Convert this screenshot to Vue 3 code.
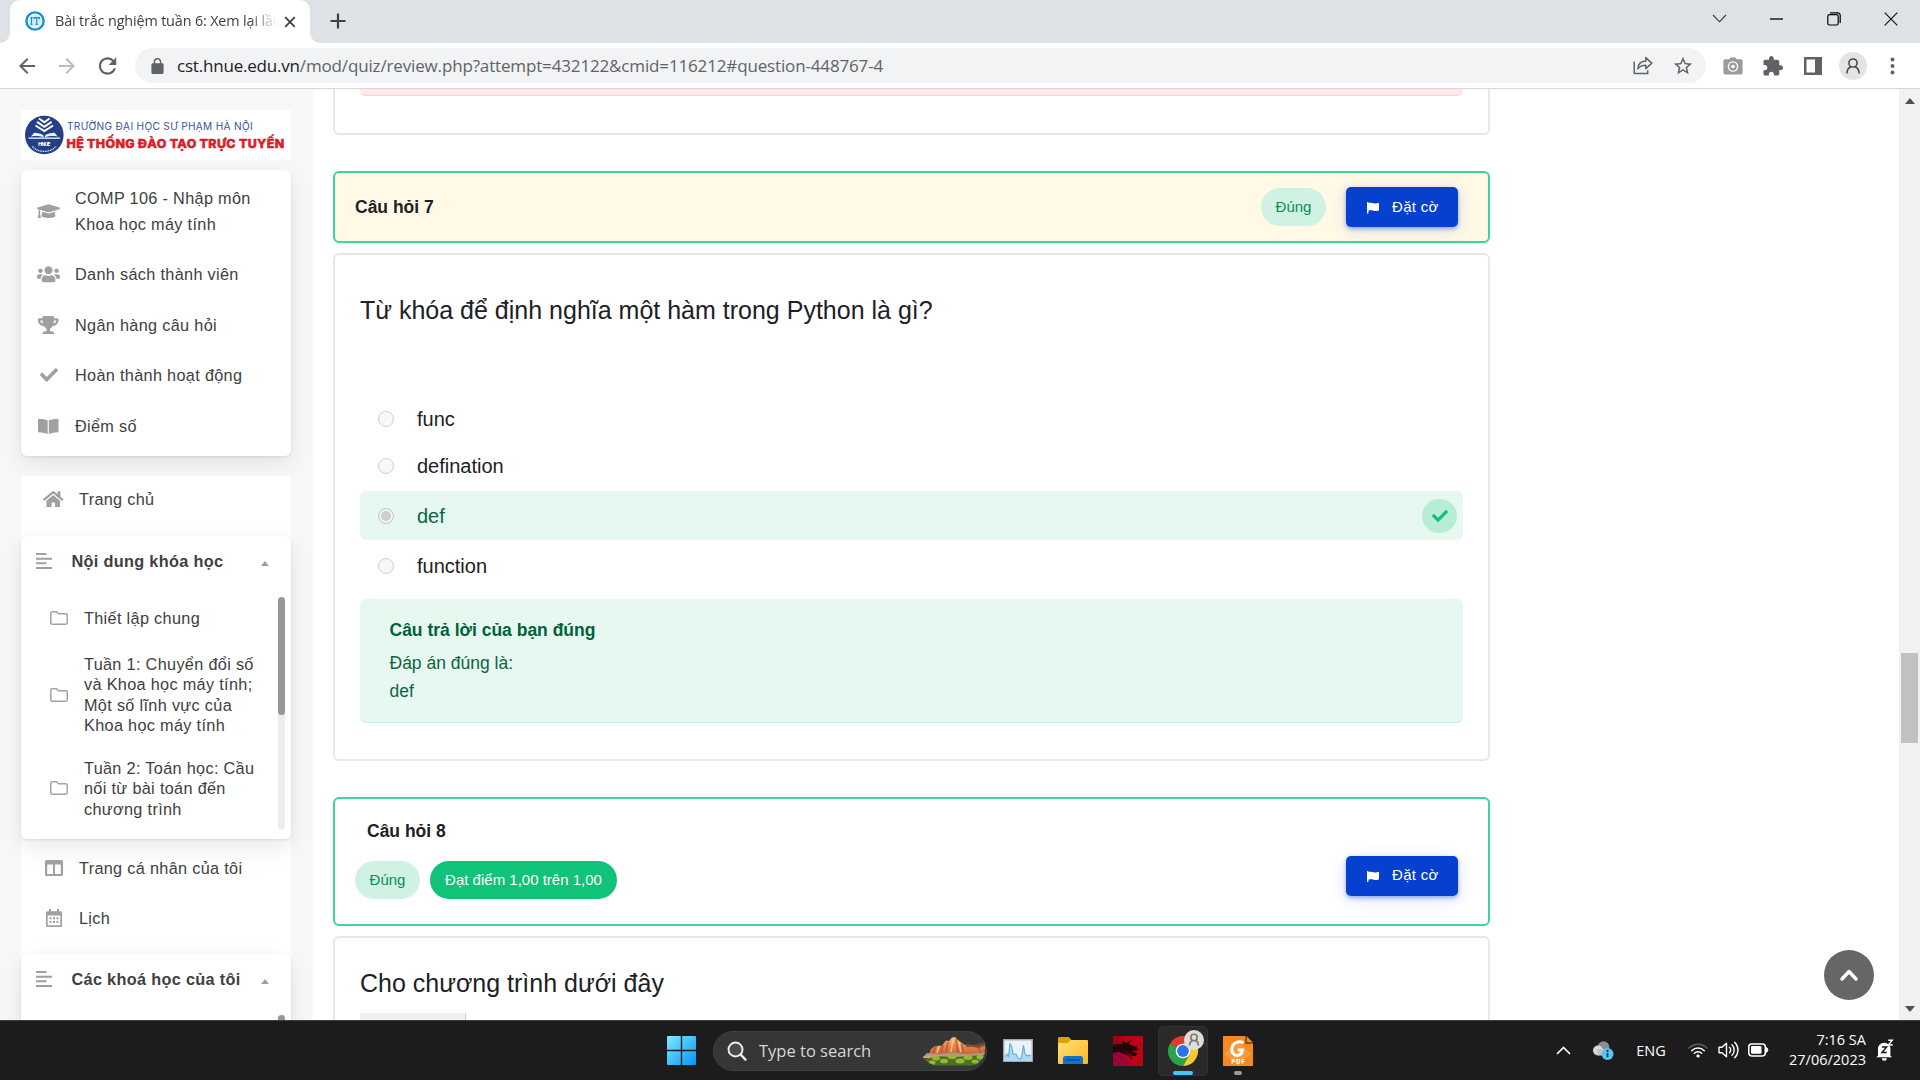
<script setup>
const courseMenu = [
  { icon: 'cap', label: 'COMP 106 - Nhập môn Khoa học máy tính' },
  { icon: 'users', label: 'Danh sách thành viên' },
  { icon: 'trophy', label: 'Ngân hàng câu hỏi' },
  { icon: 'check', label: 'Hoàn thành hoạt động' },
  { icon: 'book', label: 'Điểm số' },
]

const glyphs = {
  cap: { box: '0 0 640 512', w: 23, d: 'M622.34 153.2L343.4 67.5c-15.2-4.67-31.6-4.67-46.79 0L17.66 153.2c-23.54 7.23-23.54 38.36 0 45.59l48.63 14.94c-10.67 13.19-17.23 29.28-17.88 46.9C38.78 266.15 32 276.11 32 288c0 10.78 5.68 19.85 13.86 25.65L20.33 428.53C18.11 438.52 25.71 448 35.94 448h56.11c10.24 0 17.84-9.48 15.62-19.47L82.14 313.65C90.32 307.85 96 298.78 96 288c0-11.57-6.47-21.25-15.66-26.87.76-15.02 8.44-28.3 20.69-36.72L296.6 284.5c9.06 2.78 26.44 6.25 46.79 0l278.95-85.7c23.55-7.24 23.55-38.36 0-45.6zM352.79 315.09c-28.53 8.76-52.84 3.92-65.59 0l-145.02-44.55L128 384c0 35.35 85.96 64 192 64s192-28.65 192-64l-14.18-113.47-145.03 44.56z' },
  users: { box: '0 0 640 512', w: 23, d: 'M96 224c35.3 0 64-28.7 64-64s-28.7-64-64-64-64 28.7-64 64 28.7 64 64 64zm448 0c35.3 0 64-28.7 64-64s-28.7-64-64-64-64 28.7-64 64 28.7 64 64 64zm32 32h-64c-17.6 0-33.5 7.1-45.1 18.6 40.3 22.1 68.9 62 75.1 109.4h66c17.7 0 32-14.3 32-32v-32c0-35.3-28.7-64-64-64zm-256 0c61.9 0 112-50.1 112-112S381.9 32 320 32 208 82.1 208 144s50.1 112 112 112zm76.8 32h-8.3c-20.8 10-43.9 16-68.5 16s-47.6-6-68.5-16h-8.3C179.6 288 128 339.6 128 403.2V432c0 26.5 21.5 48 48 48h288c26.5 0 48-21.5 48-48v-28.8c0-63.6-51.6-115.2-115.2-115.2zm-223.7-13.4C161.5 263.1 145.6 256 128 256H64c-35.3 0-64 28.7-64 64v32c0 17.7 14.3 32 32 32h65.9c6.3-47.4 34.9-87.3 75.2-109.4z' },
  trophy: { box: '0 0 576 512', w: 20.5, d: 'M552 64H448V24c0-13.3-10.7-24-24-24H152c-13.3 0-24 10.7-24 24v40H24C10.7 64 0 74.7 0 88v56c0 35.7 22.5 72.4 61.9 100.7 31.5 22.7 69.8 37.1 110 41.7C203.3 338.5 240 360 240 360v72h-48c-35.3 0-64 20.7-64 56v12c0 6.6 5.4 12 12 12h296c6.6 0 12-5.4 12-12v-12c0-35.3-28.7-56-64-56h-48v-72s36.7-21.5 68.1-73.6c40.3-4.6 78.6-19 110-41.7 39.3-28.3 61.9-65 61.9-100.7V88c0-13.3-10.7-24-24-24zM99.3 192.8C74.9 175.2 64 155.6 64 144v-16h64.2c1 32.6 5.8 61.2 12.8 86.2-15.1-5.2-29.2-12.4-41.7-21.4zM512 144c0 16.1-17.7 36.1-35.3 48.8-12.5 9-26.7 16.2-41.8 21.4 7-25 11.8-53.6 12.8-86.2H512v16z' },
  check: { box: '0 0 512 512', w: 18, d: 'M173.898 439.404l-166.4-166.4c-9.997-9.997-9.997-26.206 0-36.204l36.203-36.204c9.997-9.998 26.207-9.998 36.204 0L192 312.69 432.095 72.596c9.997-9.997 26.207-9.997 36.204 0l36.203 36.204c9.997 9.997 9.997 26.206 0 36.204l-294.4 294.401c-9.998 9.997-26.207 9.997-36.204-.001z' },
  book: { box: '0 0 576 512', w: 20.5, d: 'M20 48C120 50 200 66 264 92c6 3 8 6 8 12v360c0 10-8 14-16 11C190 446 110 434 18 430 8 429 0 422 0 412V66c0-11 9-18 20-18zM556 48C456 50 376 66 312 92c-6 3-8 6-8 12v360c0 10 8 14 16 11 66-29 146-41 238-45 10-1 18-8 18-18V66c0-11-9-18-20-18z' },
  home: { box: '0 0 576 512', w: 20.5, d: 'M280.37 148.26L96 300.11V464a16 16 0 0 0 16 16l112.06-.29a16 16 0 0 0 15.92-16V368a16 16 0 0 1 16-16h64a16 16 0 0 1 16 16v95.64a16 16 0 0 0 16 16.05L464 480a16 16 0 0 0 16-16V300L295.67 148.26a12.19 12.19 0 0 0-15.3 0zM571.6 251.47L488 182.56V44.05a12 12 0 0 0-12-12h-56a12 12 0 0 0-12 12v72.61L318.47 43a48 48 0 0 0-61 0L4.34 251.47a12 12 0 0 0-1.6 16.9l25.5 31A12 12 0 0 0 45.15 301l235.22-193.74a12.19 12.19 0 0 1 15.3 0L530.9 301a12 12 0 0 0 16.9-1.6l25.5-31a12 12 0 0 0-1.7-16.93z' },
}

const sections = [
  ['Thiết lập chung'],
  ['Tuần 1: Chuyển đổi số', 'và Khoa học máy tính;', 'Một số lĩnh vực của', 'Khoa học máy tính'],
  ['Tuần 2: Toán học: Cầu', 'nối từ bài toán đến', 'chương trình'],
]

const answers = [
  { text: 'func' },
  { text: 'defination' },
  { text: 'def', correct: true },
  { text: 'function' },
]
</script>

<template>
  <div class="screen">
    <header class="tabstrip">
      <div class="tab">
        <svg class="favicon" width="20" height="20" viewBox="0 0 20 20">
          <circle cx="10" cy="10" r="8.600" fill="#fff" stroke="#1b8fd0" stroke-width="2.400" />
          <circle cx="10" cy="10" r="6.600" fill="#d9eefa" />
          <path d="M6.500 6.500v7M5.400 6.600h2.200M5.400 13.400h2.200M9 8.200V6.700h5.400v1.500M11.700 6.700v6.700M10.500 13.400h2.400" stroke="#1b8fd0" stroke-width="1.200" fill="none" />
        </svg>
        <span class="tab-title">Bài trắc nghiệm tuần 6: Xem lại lần</span>
        <svg class="tab-close" width="12" height="12" viewBox="0 0 12 12"><path d="M1.200 1.200l9.600 9.600M10.800 1.200L1.200 10.800" stroke="#3c4043" stroke-width="1.800" /></svg>
      </div>
      <svg class="new-tab" width="16" height="16" viewBox="0 0 16 16"><path d="M8 .5v15M.5 8h15" stroke="#3c4043" stroke-width="2.200" /></svg>
      <div class="window-buttons">
        <span><svg width="15" height="9" viewBox="0 0 15 9"><path d="M1 1l6.500 6.800L14 1" fill="none" stroke="#333" stroke-width="1.100" /></svg></span>
        <span><svg width="13" height="2" viewBox="0 0 13 2"><path d="M0 1h13" stroke="#000" stroke-width="1.300" /></svg></span>
        <span><svg width="14" height="14" viewBox="0 0 14 14"><rect x=".8" y="2.600" width="10.400" height="10.400" rx="1.800" fill="none" stroke="#000" stroke-width="1.200" /><path d="M3 .9h7.600a2.600 2.600 0 0 1 2.600 2.600V11" fill="none" stroke="#000" stroke-width="1.200" /></svg></span>
        <span><svg width="14" height="14" viewBox="0 0 14 14"><path d="M.7.7l12.600 12.600M13.300.7L.7 13.300" stroke="#111" stroke-width="1.200" /></svg></span>
      </div>
    </header>

    <div class="toolbar">
      <span class="tool"><svg width="24" height="24" viewBox="0 0 24 24" fill="#5f6368"><path d="M20 11H7.830l5.590-5.590L12 4l-8 8 8 8 1.410-1.410L7.830 13H20v-2z" /></svg></span>
      <span class="tool"><svg width="24" height="24" viewBox="0 0 24 24" fill="#babcbe"><path d="M4 11h12.170l-5.590-5.590L12 4l8 8-8 8-1.410-1.410L16.170 13H4v-2z" /></svg></span>
      <span class="tool"><svg width="26" height="26" viewBox="-.5 0 24 24" fill="#5f6368"><path d="M17.650 6.350C16.200 4.900 14.210 4 12 4c-4.420 0-7.990 3.580-7.990 8s3.570 8 7.990 8c3.730 0 6.840-2.550 7.730-6h-2.080c-.82 2.330-3.040 4-5.650 4-3.310 0-6-2.690-6-6s2.690-6 6-6c1.660 0 3.140.69 4.220 1.780L13 11h7V4l-2.350 2.350z" /></svg></span>
      <div class="omnibox">
        <svg class="lock" width="15" height="16" viewBox="4 1 16 21" fill="#5f6368"><path d="M18 8h-1V6c0-2.760-2.240-5-5-5S7 3.240 7 6v2H6c-1.100 0-2 .9-2 2v10c0 1.100.9 2 2 2h12c1.100 0 2-.9 2-2V10c0-1.100-.9-2-2-2zM15.100 8H8.900V6c0-1.710 1.390-3.100 3.100-3.100s3.100 1.390 3.100 3.100v2z" /></svg>
        <span class="url"><b>cst.hnue.edu.vn</b>/mod/quiz/review.php?attempt=432122&amp;cmid=116212#question-448767-4</span>
        <span class="tool"><svg width="20" height="19" viewBox="0 0 20 19" fill="none" stroke="#5f6368" stroke-width="1.500"><path d="M1.200 5.500v12h13.500v-3.200" /><path d="M4.800 12.800c.3-4.600 2.800-7.400 8-7.700V1.600l6 5.500-6 5.500V9.200c-3.600 0-6.100 1-8 3.600z" stroke-linejoin="round" /></svg></span>
        <span class="tool"><svg width="22" height="22" viewBox="0 0 24 24" fill="#5f6368"><path d="M22 9.240l-7.190-.62L12 2 9.190 8.630 2 9.240l5.460 4.730L5.820 21 12 17.270 18.180 21l-1.630-7.030L22 9.240zM12 15.400l-3.760 2.270 1-4.280-3.320-2.880 4.380-.38L12 6.100l1.710 4.040 4.380.38-3.320 2.880 1 4.280L12 15.400z" /></svg></span>
      </div>
      <span class="tool first"><svg width="20" height="18" viewBox="0 0 20 18"><path d="M6.500 2.200L7.200.6h5.600l.7 1.600H18a1.600 1.600 0 0 1 1.600 1.600v12a1.600 1.600 0 0 1-1.600 1.600H2a1.600 1.600 0 0 1-1.600-1.600v-12A1.600 1.600 0 0 1 2 2.200z" fill="#9a9b9c" /><circle cx="10" cy="9.500" r="5.300" fill="#fff" /><circle cx="10" cy="9.500" r="3.900" fill="#9a9b9c" /><circle cx="10" cy="9.500" r="1.800" fill="#fff" /></svg></span>
      <span class="tool"><svg width="20" height="20" viewBox="1.500 1 21.500 21.500" fill="#5f6368"><path d="M20.500 11H19V7c0-1.100-.9-2-2-2h-4V3.500C13 2.120 11.880 1 10.500 1S8 2.120 8 3.500V5H4c-1.100 0-1.990.9-1.990 2v3.800H3.500c1.490 0 2.700 1.210 2.700 2.700s-1.210 2.700-2.700 2.700H2V20c0 1.100.9 2 2 2h3.800v-1.500c0-1.490 1.210-2.700 2.700-2.700 1.490 0 2.700 1.210 2.700 2.700V22H17c1.100 0 2-.9 2-2v-4h1.500c1.380 0 2.500-1.120 2.500-2.500S21.880 11 20.500 11z" /></svg></span>
      <span class="tool"><svg width="18" height="18" viewBox="0 0 18 18"><path d="M0 0h18v18H0zM2.500 2.500v13h8.500v-13z" fill="#5f6368" fill-rule="evenodd" /></svg></span>
      <span class="tool"><span class="avatar"><svg width="14" height="16" viewBox="0 0 14 16" fill="none" stroke="#444" stroke-width="1.500"><circle cx="7" cy="5" r="4.100" /><path d="M1 15.500c0-3.400 1.600-5.800 4-6.700M13 15.500c0-3.400-1.600-5.800-4-6.700" /></svg></span></span>
      <span class="tool dots"><svg width="5" height="18" viewBox="0 0 5 18" fill="#5f6368"><circle cx="2.500" cy="2.500" r="2" /><circle cx="2.500" cy="9" r="2" /><circle cx="2.500" cy="15.500" r="2" /></svg></span>
    </div>

    <div class="page">
      <aside class="sidebar">
        <div class="logo">
          <svg width="270" height="50" viewBox="0 0 270 50">
            <circle cx="23.300" cy="25" r="19.300" fill="#233f88" />
            <g fill="none" stroke="#fff">
              <path d="M18 8.500l5.300 3.800 5.300-3.800M16 11.800l7.300 5 7.300-5M14.500 15.500l8.800 5.600 8.800-5.600" stroke-width="2" />
            </g>
            <g fill="#fff">
              <path d="M22.600 25.500c-2.600-2-6-2.800-9.600-2.700l-3 3.600c5-.6 9.300-.3 12.600.8zM24 25.500c2.600-2 6-2.800 9.600-2.700l3 3.600c-5-.6-9.300-.3-12.600.8z" opacity=".92" />
              <path d="M7.500 27.600h31.600v1.200H7.500z" />
            </g>
            <text x="17.200" y="36" fill="#fff" font-family="Inter, sans-serif" font-size="5" font-weight="800" textLength="12.500">HNUE</text>
            <path d="M11.500 36.500c5.500 6.500 18 6.500 23.500 0" fill="none" stroke="#fff" stroke-width="1.300" stroke-dasharray="1 .7" />
            <text x="46" y="19.700" fill="#3c5495" font-family="Inter, sans-serif" font-size="10.300" textLength="186" lengthAdjust="spacingAndGlyphs">TRƯỜNG ĐẠI HỌC SƯ PHẠM HÀ NỘI</text>
            <text x="45.500" y="38.300" fill="#d81e28" stroke="#d81e28" stroke-width=".5" font-family="Inter, sans-serif" font-size="12" font-weight="800" textLength="218" lengthAdjust="spacingAndGlyphs">HỆ THỐNG ĐÀO TẠO TRỰC TUYẾN</text>
          </svg>
        </div>

        <nav class="card course-menu">
          <a v-for="item in courseMenu" :key="item.icon" class="menu-row">
            <span class="menu-icon"><svg :width="glyphs[item.icon].w" :viewBox="glyphs[item.icon].box"><path :d="glyphs[item.icon].d" /></svg></span>
            <span>{{ item.label }}</span>
          </a>
        </nav>

        <div class="drawer">
          <a class="link home"><span class="link-icon"><svg :width="glyphs.home.w" :viewBox="glyphs.home.box"><path :d="glyphs.home.d" /></svg></span>Trang chủ</a>

          <section class="card outline">
            <div class="card-head">
              <svg width="16" height="16" viewBox="0 0 16 16"><path d="M0 1h10.500M0 5.700h16M0 10.300h10.500M0 15h16" stroke="#a0a0a0" stroke-width="2" /></svg>
              <b>Nội dung khóa học</b>
              <i class="caret"></i>
            </div>
            <div class="outline-body">
              <ul>
                <li v-for="(lines, i) in sections" :key="i">
                  <svg width="18" height="14" viewBox="0 0 18 14"><path d="M.8 2.200C.8 1.300 1.300.8 2.200.8h4.300l2 2h7.300c.9 0 1.400.5 1.400 1.400v7.600c0 .9-.5 1.400-1.400 1.400H2.200c-.9 0-1.400-.5-1.400-1.400z" fill="none" stroke="#a3a3a3" stroke-width="1.500" /></svg>
                  <span><span v-for="line in lines" :key="line" class="line">{{ line }}</span></span>
                </li>
              </ul>
              <div class="track"><div class="thumb"></div></div>
            </div>
          </section>

          <a class="link profile"><span class="link-icon"><svg width="18" height="16" viewBox="0 0 18 16"><path d="M1.500 0h15A1.500 1.500 0 0 1 18 1.500v13a1.500 1.500 0 0 1-1.500 1.500h-15A1.500 1.500 0 0 1 0 14.500v-13A1.500 1.500 0 0 1 1.500 0zM2.200 4.500V14H8V4.500zm7.800 0V14h5.800V4.500z" fill-rule="evenodd" /></svg></span>Trang cá nhân của tôi</a>
          <a class="link"><span class="link-icon"><svg width="16" height="18" viewBox="0 0 16 18"><path d="M3 0h2v2.200h6V0h2v2.200h1.500A1.500 1.500 0 0 1 16 3.700v12.800a1.500 1.500 0 0 1-1.500 1.500h-13A1.500 1.500 0 0 1 0 16.500V3.700a1.500 1.500 0 0 1 1.500-1.500H3zM1.700 6.500v9.800h12.600V6.500z" fill-rule="evenodd" /><path d="M3.500 8.200h2v2h-2zm3.500 0h2v2H7zm3.500 0h2v2h-2zm-7 3.900h2v2h-2zm3.500 0h2v2H7zm3.500 0h2v2h-2z" /></svg></span>Lịch</a>

          <section class="card my-courses">
            <div class="card-head">
              <svg width="16" height="16" viewBox="0 0 16 16"><path d="M0 1h10.500M0 5.700h16M0 10.300h10.500M0 15h16" stroke="#a0a0a0" stroke-width="2" /></svg>
              <b>Các khoá học của tôi</b>
              <i class="caret"></i>
            </div>
            <div class="outline-body"><div class="track"><div class="thumb"></div></div></div>
          </section>
        </div>
      </aside>

      <main class="content">
        <section class="panel previous"><div class="wrong"></div></section>

        <section class="question-head current">
          <b>Câu hỏi 7</b>
          <div class="actions">
            <span class="pill soft">Đúng</span>
            <button class="flag"><svg width="12" height="11.500" viewBox="0 0 12 11.500"><path d="M0 .3A.7.7 0 0 1 1.400.3v.8c2.200-.8 3.700-.4 5.200.1 1.600.5 2.900.5 5.400-.4v7.400c-2.300 1-3.900 1-5.500.5-1.600-.5-3-.7-5.100 0v2.300a.7.7 0 0 1-1.400 0z" fill="#fff" /></svg>Đặt cờ</button>
          </div>
        </section>

        <section class="panel question">
          <h2>Từ khóa để định nghĩa một hàm trong Python là gì?</h2>
          <div class="answers">
            <label v-for="a in answers" :key="a.text" class="answer" :class="{ correct: a.correct }">
              <i class="radio"></i>{{ a.text }}
              <span v-if="a.correct" class="tick"><svg width="16" viewBox="0 0 512 512"><path :d="glyphs.check.d" fill="#12bf76" /></svg></span>
            </label>
          </div>
          <div class="feedback">
            <b>Câu trả lời của bạn đúng</b>
            <p>Đáp án đúng là:</p>
            <p>def</p>
          </div>
        </section>

        <section class="question-head next">
          <div class="info">
            <b>Câu hỏi 8</b>
            <div class="pills"><span class="pill soft">Đúng</span><span class="pill solid">Đạt điểm 1,00 trên 1,00</span></div>
          </div>
          <button class="flag"><svg width="12" height="11.500" viewBox="0 0 12 11.500"><path d="M0 .3A.7.7 0 0 1 1.400.3v.8c2.200-.8 3.700-.4 5.200.1 1.600.5 2.900.5 5.400-.4v7.400c-2.300 1-3.900 1-5.500.5-1.600-.5-3-.7-5.100 0v2.300a.7.7 0 0 1-1.400 0z" fill="#fff" /></svg>Đặt cờ</button>
        </section>

        <section class="panel following">
          <h2>Cho chương trình dưới đây</h2>
          <div class="code"></div>
        </section>
      </main>

      <button class="to-top"><svg width="18" height="12" viewBox="0 0 18 12"><path d="M2 10l7-7.500L16 10" fill="none" stroke="#fff" stroke-width="3.400" stroke-linecap="round" stroke-linejoin="round" /></svg></button>

      <div class="scrollbar">
        <svg width="10" height="6" viewBox="0 0 10 6"><path d="M0 6l5-6 5 6z" fill="#505050" /></svg>
        <div class="scroll-thumb"></div>
        <svg class="down" width="10" height="6" viewBox="0 0 10 6"><path d="M0 0l5 6 5-6z" fill="#505050" /></svg>
      </div>
    </div>

    <footer class="taskbar">
      <span class="app">
        <svg width="29" height="29" viewBox="0 0 29 29">
          <defs><linearGradient id="win" x1="0" y1="0" x2="1" y2="1" gradientUnits="objectBoundingBox"><stop offset="0" stop-color="#7cecff" /><stop offset="1" stop-color="#0793f6" /></linearGradient></defs>
          <path d="M1 0h12.800v13.800H0V1a1 1 0 0 1 1-1zM15.200 0H28a1 1 0 0 1 1 1v12.800H15.200zM0 15.200h13.800V29H1a1 1 0 0 1-1-1zM15.200 15.200H29V28a1 1 0 0 1-1 1H15.200z" fill="url(#win)" />
        </svg>
      </span>
      <div class="search">
        <svg width="20" height="20" viewBox="0 0 20 20"><circle cx="8.500" cy="8.500" r="7" fill="#4a4a4c" stroke="#eee" stroke-width="1.900" /><path d="M13.600 13.600l4.900 5" stroke="#eee" stroke-width="2.300" stroke-linecap="round" /></svg>
        <span>Type to search</span>
        <svg class="scenery" width="63" height="29" viewBox="0 0 63 29">
          <defs>
            <linearGradient id="rock" x1="0" y1="0" x2="0" y2="1"><stop offset="0" stop-color="#f6bd7e" /><stop offset=".5" stop-color="#e88746" /><stop offset="1" stop-color="#c2613a" /></linearGradient>
            <linearGradient id="sand" x1="0" y1="0" x2="0" y2="1"><stop offset="0" stop-color="#a9836c" /><stop offset="1" stop-color="#d8a984" /></linearGradient>
            <clipPath id="scene"><path d="M6 0h57v12a19 19 0 0 1-8 15.500Q50 29 44 28.500H12Q6 26 0 21l6-7z" /></clipPath>
          </defs>
          <g clip-path="url(#scene)">
            <path d="M7 17l2-5 4-3 7-.5 4-5 3 .5 3-3.500 3-.5 3 3 4 3 3 2 7 0 5 1 8-2v11H7z" fill="url(#rock)" />
            <path d="M14 9l-3 7M21 8l-2 8M26 5l-2 10M34 2l2 14M40 7l1 9M56 9l3 8" stroke="#a8502d" stroke-width="1.600" opacity=".75" />
            <path d="M17 9l-2 7M31 2l-2 13M37 5l2 10" stroke="#ffd39a" stroke-width="1.600" opacity=".8" />
            <path d="M44 6l8 2 6-2 5-1v4l-6 2-6-1-7 0z" fill="#6f433b" opacity=".8" />
            <path d="M0 21l5-5 12 1 14-2 14 2 18-2v6z" fill="url(#sand)" />
            <path d="M2 22l14-3 14 1 16-1 16-1v11H4z" fill="#4e7020" />
            <g fill="#93b83a"><ellipse cx="14" cy="21" rx="4" ry="2.500" /><ellipse cx="30" cy="19.500" rx="4.500" ry="2.600" /><ellipse cx="46" cy="20.500" rx="4.500" ry="2.500" /><ellipse cx="58" cy="20" rx="3.500" ry="2.500" /><ellipse cx="22" cy="24" rx="4" ry="2.300" /><ellipse cx="38" cy="24" rx="4.500" ry="2.500" /><ellipse cx="53" cy="24.500" rx="3.500" ry="2" /><ellipse cx="10" cy="25.500" rx="3.500" ry="2" /></g>
          </g>
        </svg>
      </div>
      <span class="app">
        <svg width="30" height="23" viewBox="0 0 30 23"><rect x=".7" y=".7" width="28.600" height="21.600" fill="#edf2f8" stroke="#9aa7b3" stroke-width="1.400" /><path d="M2 18l2-3 1.500 2L7 5l1.500 2L10 15h3l2 4 2 1.500 1.500-2L20.500 6l1.500 9 2 2 2-1 2 1v4.500H2z" fill="#a9d9f5" /><path d="M2 18l2-3 1.500 2L7 5l1.500 2L10 15h3l2 4 2 1.500 1.500-2L20.500 6l1.500 9 2 2 2-1 2 1" fill="none" stroke="#58ade0" stroke-width="1.100" /></svg>
      </span>
      <span class="app">
        <svg width="30" height="27" viewBox="0 0 30 27"><defs><linearGradient id="dir" x1="0" y1="0" x2="1" y2="1"><stop offset="0" stop-color="#ffe07a" /><stop offset="1" stop-color="#fbb91d" /></linearGradient></defs><path d="M0 1.500A1.500 1.500 0 0 1 1.500 0h8.200c1 0 1.800.5 2.500 1.400L14 4v3H0z" fill="#e0a008" /><path d="M0 6h10l2.500-3H29a1 1 0 0 1 1 1v22a1 1 0 0 1-1 1H1a1 1 0 0 1-1-1z" fill="url(#dir)" /><path d="M5 27v-5.500A2.500 2.500 0 0 1 7.500 19h15a2.500 2.500 0 0 1 2.500 2.500V27z" fill="#1173cf" /><path d="M9 23h12" stroke="#0b4a94" stroke-width="1.400" stroke-linecap="round" /></svg>
      </span>
      <span class="app">
        <svg width="30" height="30" viewBox="0 0 30 30"><rect width="30" height="30" fill="#bd0416" /><path d="M0 0h8l4 4-4 5-8 1z" fill="#9c0414" /><path d="M0 15c6 0 10 1 13 5s3 7 7 10H0z" fill="#a30438" /><path d="M0 9l4-1 6 0-1-4 4 3 5-3-2 4 4 2 4 1 1 3-2 1-4-1 2 2 3 1-1 3-4 0-3-2-5 0-5-2-6 1z" fill="#200709" /><path d="M10 17c4 1 7 3 9 6M13 16c4 1 6 2 8 4" fill="none" stroke="#53040f" stroke-width="1.300" /><path d="M0 18c4 0 8 2 10 6M0 23c3 0 5 2 7 6" fill="none" stroke="#7c0630" stroke-width="1" /></svg>
      </span>
      <span class="app active">
        <svg width="50" height="50" viewBox="0 0 50 50">
          <path d="M25 25L12 17.500A15 15 0 0 1 38 17.500z" fill="#e33b2e" />
          <path d="M25 25L12 17.500A15 15 0 0 0 25 40l6-10.500z" fill="#2ba24c" />
          <path d="M25 17.500h13A15 15 0 0 1 25 40l6.500-11.300z" fill="#fcc934" />
          <circle cx="25" cy="25" r="7.300" fill="#fff" /><circle cx="25" cy="25" r="5.900" fill="#2c73ea" />
          <circle cx="36" cy="14" r="10" fill="#deded9" />
          <g fill="none" stroke="#777" stroke-width="1.600"><circle cx="36" cy="11.500" r="3.200" /><path d="M31.600 19.500c0-2.600 1.200-4.200 2.900-4.900M40.400 19.500c0-2.600-1.200-4.200-2.900-4.900" /></g>
        </svg>
      </span>
      <span class="app running">
        <svg width="30" height="30" viewBox="0 0 30 30"><path d="M0 0h22.500v7.500H30V30H0z" fill="#f6891f" /><path d="M23.500 0L30 6.500h-6.500z" fill="#f6891f" /><path d="M15 5l13 13-13 11L1 18z" fill="#fba95a" opacity=".55" /><path d="M20.500 6.800C16 4.600 9.200 6.500 8.800 13c-.2 4.700 3.200 7 6.200 6.300 2.600-.6 4.200-2.600 4.400-5.400h-4.600" fill="none" stroke="#fff" stroke-width="3" /><text x="8.500" y="27.500" fill="#fff" font-family="Inter, sans-serif" font-size="5.800" font-weight="800" textLength="13.500">PDF</text></svg>
      </span>

      <div class="tray">
        <span class="t40"><svg width="15" height="9" viewBox="0 0 15 9"><path d="M1 8l6.500-6.500L14 8" fill="none" stroke="#fff" stroke-width="1.600" /></svg></span>
        <span class="t40"><svg width="22" height="22" viewBox="0 0 22 22"><circle cx="11.500" cy="8" r="5.800" fill="#8d8d8d" /><circle cx="6" cy="11.500" r="5" fill="#d8d8d8" /><path d="M5 10h10l4 6.500H6z" fill="#c3c3c3" /><circle cx="15.500" cy="15" r="6" fill="#58c4f8" /><path d="M15.500 14v4.200" stroke="#10303f" stroke-width="1.700" /><circle cx="15.500" cy="11.800" r="1.100" fill="#10303f" /></svg></span>
        <span class="lang">ENG</span>
        <span class="t38"><svg width="20" height="16" viewBox="0 0 20 16" fill="none" stroke-linecap="round" stroke-width="1.500"><path d="M1 6a12.700 12.700 0 0 1 18 0" stroke="#5d5d5d" /><path d="M3.700 8.700a8.900 8.900 0 0 1 12.600 0M6.300 11.300a5.200 5.200 0 0 1 7.400 0" stroke="#fff" /><circle cx="10" cy="14" r="1.300" fill="#fff" stroke="#fff" stroke-width=".6" /></svg></span>
        <span class="t22"><svg width="21" height="18" viewBox="0 0 21 18" fill="none" stroke="#fff" stroke-width="1.400" stroke-linecap="round" stroke-linejoin="round"><path d="M1 6.300h3l4.500-4v13.400l-4.500-4H1zM11.500 6.300a4 4 0 0 1 0 5.400M14 3.700a7.500 7.500 0 0 1 0 10.600M16.700 1.200a11 11 0 0 1 0 15.600" /></svg></span>
        <span class="t38"><svg width="21" height="14" viewBox="0 0 21 14"><rect x=".8" y=".9" width="16.500" height="12" rx="2.800" fill="none" stroke="#fff" stroke-width="1.500" /><rect x="3" y="3.100" width="10.500" height="7.600" rx="1" fill="#fff" /><path d="M18.300 4.500c2 .2 2 4.600 0 4.800z" fill="#fff" stroke="#fff" /></svg></span>
        <div class="clock"><span>7:16 SA</span><span>27/06/2023</span></div>
        <span class="t38 bell"><svg width="18" height="22" viewBox="0 0 18 22"><path d="M2 16.500V10a6.200 6.200 0 0 1 12.400 0v6.500l1.600 1.700H.5zM5.800 19.300h5a2.500 2.500 0 0 1-5 0z" fill="#fff" /><path d="M10.500 0H18v7.600h-4z" fill="#1c1c1c" /><path d="M6 8h4.600L6 13.500h4.800" fill="none" stroke="#1c1c1c" stroke-width="1.500" /><path d="M12.200 1.200h4L12.500 6h4.200" fill="none" stroke="#fff" stroke-width="1.400" /></svg></span>
      </div>
    </footer>
  </div>
</template>

<style>
body { margin: 0; background: #fff; overflow: hidden; }
</style>

<style scoped>
* { box-sizing: border-box; }
.screen { width: 1920px; height: 1080px; display: flex; flex-direction: column; overflow: hidden; font-family: "Liberation Sans", Arial, sans-serif; }
svg { display: block; flex: none; }
button { border: 0; padding: 0; font: inherit; }

.tabstrip { height: 43px; flex: none; background: #dee1e6; display: flex; align-items: center; font-family: "Open Sans", "Noto Sans", sans-serif; }
.tab { position: relative; width: 300px; height: 43px; margin-left: 10px; background: #fff; border-radius: 10px 10px 0 0; display: flex; align-items: center; padding-left: 15px; }
.tab::before, .tab::after { content: ""; position: absolute; bottom: 0; width: 10px; height: 10px; }
.tab::before { left: -10px; background: radial-gradient(circle at 0 0, transparent 9.5px, #fff 10px); }
.tab::after { right: -10px; background: radial-gradient(circle at 100% 0, transparent 9.5px, #fff 10px); }
.favicon { margin-top: -1px; }
.tab-title { width: 220px; margin-left: 10px; margin-top: -2px; font-size: 14.4px; letter-spacing: -.15px; color: #3c4043; white-space: nowrap; overflow: hidden; mask-image: linear-gradient(90deg, #000 195px, transparent 222px); }
.tab-close { margin-left: 9px; }
.new-tab { margin-left: 19.5px; margin-top: -1px; }
.window-buttons { margin-left: auto; display: flex; height: 37px; align-self: flex-start; }
.window-buttons span { width: 57.25px; display: flex; align-items: center; justify-content: center; }

.toolbar { height: 46px; flex: none; background: #fff; border-bottom: 1px solid #d5d7da; display: flex; align-items: center; padding: 0 7px 0 7px; }
.tool { width: 40px; flex: none; display: flex; justify-content: center; align-items: center; }
.tool.first { margin-left: 7px; }
.dots { padding-right: 1px; }
.omnibox { flex: 1; height: 35px; margin-left: 8px; border-radius: 18px; background: #f1f3f4; display: flex; align-items: center; padding: 0 3px 0 15px; }
.url { flex: 1; margin-left: 12px; font-family: "Open Sans", "Noto Sans", sans-serif; font-size: 17px; letter-spacing: -.15px; color: #5f6368; white-space: nowrap; }
.url b { font-weight: 400; color: #202124; letter-spacing: -.2px; }
.avatar { width: 28px; height: 28px; border-radius: 50%; background: #e4e4e4; display: flex; align-items: center; justify-content: center; }

.page { position: relative; height: 931px; flex: none; display: flex; overflow: hidden; background: #fff; }
.sidebar { width: 313px; flex: none; background: #f8f8f8; padding: 21px 22px 0 21px; overflow: hidden; font-size: 16.25px; letter-spacing: .02em; color: #404040; }
.logo { height: 50px; background: #fff; }
.card { background: #fff; border-radius: 6px; box-shadow: 0 1px 3px rgba(0, 0, 0, .1), 0 8px 26px rgba(0, 0, 0, .09); }
.course-menu { margin-top: 10px; height: 286px; padding: 2.5px 15px 0; }
.menu-row { display: flex; align-items: center; min-height: 50.5px; padding: 12px 0; line-height: 26.25px; }
.menu-icon { width: 25px; flex: none; margin-right: 14px; display: flex; justify-content: center; fill: #a0a0a0; }
.drawer { margin-top: 20px; height: 700px; background: #fff; padding-top: 1px; }
.link { display: flex; align-items: center; height: 50px; padding-left: 20px; }
.link-icon { width: 25px; flex: none; margin-right: 13px; display: flex; justify-content: center; fill: #a0a0a0; }
.home { margin-top: -2px; height: 49px; }
.outline { margin-top: 12px; height: 303px; }
.card-head { display: flex; align-items: center; height: 50px; padding: 0 22px 0 15px; }
.card-head svg { margin-top: -1px; }
.card-head b { margin-left: 19.5px; color: #404040; }
.caret { margin-left: auto; margin-top: 4px; border: 4.5px solid transparent; border-top: 0; border-bottom: 5px solid #a0a0a0; }
.outline-body { display: flex; margin-top: 11px; padding-right: 6px; }
ul { flex: 1; margin: 0; padding: 0; list-style: none; }
li { display: flex; align-items: center; padding: 11px 0 11px 29px; line-height: 20.5px; }
li:first-child { margin-bottom: 3px; }
li > span { margin-left: 16px; }
.line { display: block; white-space: nowrap; }
.track { width: 7px; height: 233px; margin-left: auto; border-radius: 4px; background: #ededed; flex: none; }
.thumb { height: 118px; border-radius: 4px; background: #979797; }
.profile { margin-top: 4px; }
.my-courses { margin-top: 11px; height: 300px; }

.content { width: 1157px; margin-left: 20px; flex: none; color: #1d2125; }
.panel { border: 2px solid #e8e8e8; border-radius: 6px; background: #fff; padding: 0 25px; }
.previous { height: 46px; border-top: 0; border-radius: 0 0 6px 6px; }
.wrong { height: 7px; background: #ffe8e9; border-bottom: 1px solid #fcd0d3; border-radius: 0 0 6px 6px; }
.question-head { border: 2px solid #3dd598; border-radius: 6px; display: flex; justify-content: space-between; font-size: 17.5px; }
.current { margin-top: 36px; height: 72px; background: #fff9e6; align-items: center; padding: 0 30px 0 20px; }
.actions { display: flex; align-items: center; gap: 20px; }
.pill { height: 38px; border-radius: 19px; display: inline-flex; align-items: center; justify-content: center; padding-bottom: 2px; font-size: 15px; white-space: nowrap; }
.soft { width: 65px; background: #cff2e4; color: #0b8d56; }
.solid { width: 187px; background: #11c279; color: #fff; }
.flag { width: 112px; height: 40px; border-radius: 5px; background: #0640cf; color: #fff; font-size: 15px; letter-spacing: .02em; display: flex; align-items: center; gap: 13px; padding: 0 0 2px 21px; box-shadow: 0 2px 4px rgba(6, 64, 207, .4), 0 4px 18px rgba(6, 64, 207, .13); white-space: nowrap; }
.flag svg { margin-top: 4px; }
.question { margin-top: 10px; height: 508px; }
h2 { margin: 0; font-weight: 400; font-size: 25px; line-height: 38px; }
.question h2 { margin-top: 36px; }
.answers { margin-top: 66px; font-size: 20px; }
.answer { display: flex; align-items: center; height: 47px; padding-left: 18px; padding-top: 1px; }
.answer.correct { height: 49px; margin: 2px 0; background: #e7f8f0; color: #0b6640; border-radius: 6px; padding-right: 6px; }
.radio { width: 16px; height: 16px; border-radius: 50%; border: 1px solid #cfcfcf; background: #f8f8f8; margin-right: 23px; }
.correct .radio { border-color: #c4cbc7; box-shadow: inset 0 0 0 2px #f1f5f3; background: #cbcecc; }
.tick { margin-left: auto; width: 35px; height: 34px; border-radius: 17px; background: #b7edd5; display: flex; align-items: center; justify-content: center; }
.feedback { margin-top: 10px; height: 124px; border-radius: 6px; background: #e7f8f0; border-bottom: 1px solid #c6f1de; padding: 17px 29.5px; font-size: 17.5px; line-height: 28px; color: #0b6640; }
.feedback b { display: block; color: #006239; margin-bottom: 5px; }
.feedback p { margin: 0; }
.next { margin-top: 36px; height: 129px; padding: 0 30px 0 20px; align-items: center; }
.next .flag { margin-top: 28px; }
.info { align-self: flex-start; padding-top: 18px; }
.info b { display: block; padding-left: 12px; line-height: 28px; }
.pills { display: flex; gap: 10px; margin-top: 16px; }
.following { margin-top: 10px; height: 200px; }
.following h2 { margin-top: 26px; }
.code { margin-top: 11px; width: 106px; height: 60px; background: #f0f0f0; border-right: 1px solid #d0d0d0; }
.to-top { position: absolute; left: 1824px; top: 861px; width: 50px; height: 50px; border-radius: 50%; background: #666; display: flex; align-items: center; justify-content: center; }
.scrollbar { margin-left: auto; width: 21px; background: #f1f1f1; display: flex; flex-direction: column; align-items: center; padding: 9px 0 8px; }
.scroll-thumb { margin-top: 549px; width: 17px; height: 90px; background: #c1c1c1; }
.down { margin-top: auto; }

.taskbar { height: 60px; flex: none; background: #1c1c1c; border-top: 1px solid #3d4040; display: flex; align-items: center; padding: 0 16px 0 654px; font-family: "Open Sans", "Noto Sans", sans-serif; color: #fff; }
.app { position: relative; width: 55px; height: 50px; display: flex; align-items: center; justify-content: center; }
.search { width: 274px; height: 40px; margin: 0 3.5px 0 4px; border-radius: 20px; background: #363636; border: 1px solid #414141; display: flex; align-items: center; padding: 0 1px 0 13px; font-size: 16.5px; color: #d6d6d6; }
.search span { margin-left: 12px; white-space: nowrap; }
.scenery { margin-left: auto; margin-top: 2px; }
.active::before { content: ""; position: absolute; inset: 0 2.5px; background: #2a2a2a; border: 1px solid #343434; border-radius: 5px; }
.active svg { position: relative; }
.active::after, .running::after { content: ""; position: absolute; bottom: 1px; width: 20px; height: 4px; border-radius: 2px; background: #4cc2ff; }
.running::after { width: 8px; background: #9a9a9a; }
.tray { margin-left: auto; display: flex; align-items: center; height: 100%; padding-bottom: 1px; }
.tray > span { display: flex; justify-content: center; }
.t40 { width: 40px; }
.t38 { width: 38px; }
.t22 { width: 22px; }
.lang { width: 56px; font-size: 14.5px; }
.clock { width: 89px; display: flex; flex-direction: column; align-items: flex-end; font-size: 14.5px; line-height: 20px; letter-spacing: 0; }
</style>
